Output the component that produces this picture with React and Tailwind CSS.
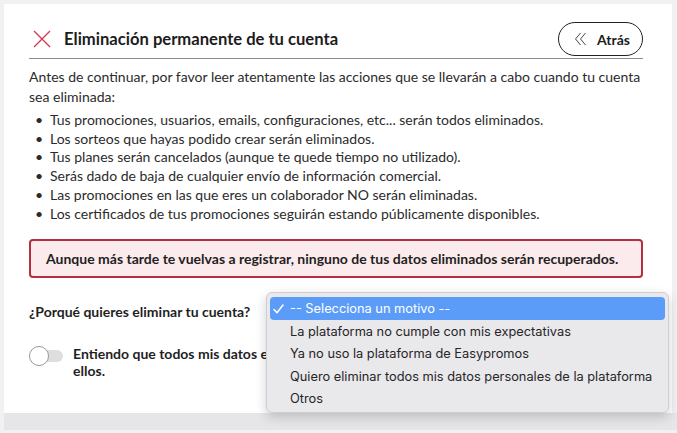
import React from 'react';

const bullets = [
    'Tus promociones, usuarios, emails, configuraciones, etc... serán todos eliminados.',
    'Los sorteos que hayas podido crear serán eliminados.',
    'Tus planes serán cancelados (aunque te quede tiempo no utilizado).',
    'Serás dado de baja de cualquier envío de información comercial.',
    'Las promociones en las que eres un colaborador NO serán eliminadas.',
    'Los certificados de tus promociones seguirán estando públicamente disponibles.',
];

const options = [
    'La plataforma no cumple con mis expectativas',
    'Ya no uso la plataforma de Easypromos',
    'Quiero eliminar todos mis datos personales de la plataforma',
    'Otros',
];

export default function App() {
    return (
        <div className="relative w-[677px] h-[433px] overflow-hidden bg-[#f1f1f2] font-['Lato',sans-serif] text-[#2b2b2b]">
            <div className="pt-[4px] pl-[4px]">
                <div className="w-[668px] h-[409px] bg-white pl-[25px] pr-[29px] pt-[18px]">
                    {/* header */}
                    <div className="flex items-center justify-between pb-[2px] border-b border-[#8c8c8c]">
                        <div className="flex items-center">
                            <svg width="18" height="18" viewBox="0 0 18 18" className="ml-[4px]">
                                <path d="M1 1L17 17M17 1L1 17" stroke="#d9364c" strokeWidth="1.3" fill="none" />
                            </svg>
                            <h1 className="ml-[13px] text-[16.6px] font-bold text-[#1c1c1c]">
                                Eliminación permanente de tu cuenta
                            </h1>
                        </div>
                        <button className="flex items-center h-[34px] w-[85px] rounded-full border border-[#222] pl-[15px]">
                            <svg width="13" height="14" viewBox="0 0 13 14">
                                <path d="M6.5 1L1.5 7L6.5 13M11.5 1L6.5 7L11.5 13" stroke="#333" strokeWidth="0.9" fill="none" />
                            </svg>
                            <span className="ml-[10px] text-[14px] font-bold text-[#1c1c1c]">Atrás</span>
                        </button>
                    </div>

                    <p className="mt-[8px] text-[14px] leading-[20px]">
                        Antes de continuar, por favor leer atentamente las acciones que se llevarán a cabo cuando tu cuenta sea eliminada:
                    </p>
                    <ul className="mt-[4px] text-[14px] leading-[18.7px]">
                        {bullets.map((b) => (
                            <li key={b} className="flex">
                                <span className="w-[21px] pl-[6px]">•</span>
                                <span>{b}</span>
                            </li>
                        ))}
                    </ul>

                    <div className="mt-[16px] h-[39px] flex items-center rounded-[4px] border-2 border-[#b3303f] bg-[#fcebed] px-[15px] text-[14px] font-bold text-[#1f1f1f]">
                        Aunque más tarde te vuelvas a registrar, ninguno de tus datos eliminados serán recuperados.
                    </div>

                    <div className="mt-[14px] flex items-center">
                        <label className="w-[254px] text-[14px] font-bold text-[#1f1f1f]">¿Porqué quieres eliminar tu cuenta?</label>
                        <div className="h-[38px] w-[348px] rounded-[6px] border border-[#c3293c]"></div>
                    </div>

                    <div className="mt-[15px] flex items-start">
                        <div className="relative mt-[1px] h-[20px] w-[34px] shrink-0">
                            <div className="absolute left-[6px] top-[4px] h-[12px] w-[28px] rounded-full bg-[#dedede]"></div>
                            <div className="absolute left-0 top-0 h-[20px] w-[20px] rounded-full border border-[#999] bg-white"></div>
                        </div>
                        <p className="ml-[10px] text-[14px] leading-[17px] font-bold text-[#1f1f1f]">
                            Entiendo que todos mis datos eliminados no podrán ser recuperados y no tendré acceso a ellos.
                        </p>
                    </div>
                </div>
            </div>
            <div className="ml-[4px] h-[17px] bg-[#e6e6e8]"></div>

            {/* open select menu */}
            <div className="absolute left-[266px] top-[292px] w-[403px] h-[121px] rounded-[6px] border border-[#cfcfd3] bg-[#e9e8eb] px-[3px] pt-[4px] shadow-[0_4px_12px_rgba(0,0,0,0.18)] font-['Inter',sans-serif] text-[12.8px] text-[#262626]">
                <div className="flex items-center h-[23px] rounded-[4px] bg-[#5b9cf8] text-white">
                    <span className="w-[20px] pl-[3px]">
                        <svg width="11" height="10" viewBox="0 0 11 10">
                            <path d="M1 5.5L4 8.8L10 1" stroke="#fff" strokeWidth="1.5" fill="none" strokeLinecap="round" strokeLinejoin="round" />
                        </svg>
                    </span>
                    <span>-- Selecciona un motivo --</span>
                </div>
                {options.map((o) => (
                    <div key={o} className="h-[22.5px] flex items-center pl-[20px]">{o}</div>
                ))}
            </div>
        </div>
    );
}
